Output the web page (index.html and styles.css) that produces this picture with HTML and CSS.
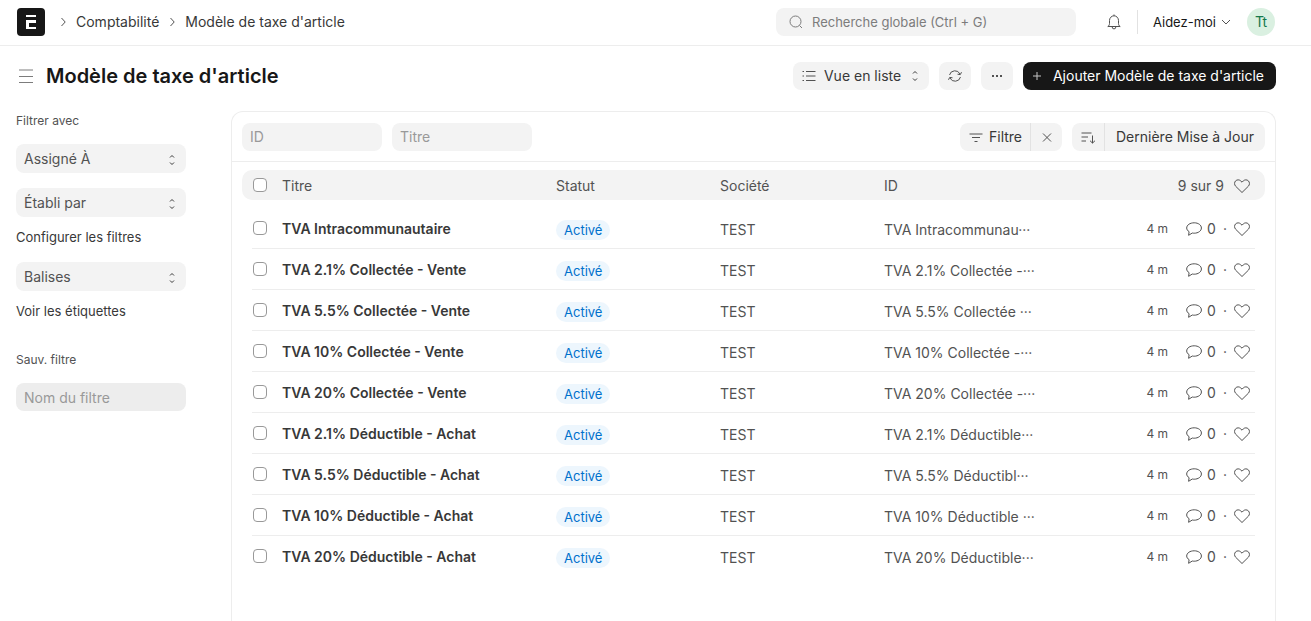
FILE: index.html
```
<!DOCTYPE html>
<html lang="fr">
<head>
    <meta charset="UTF-8">
    <meta name="viewport" content="width=device-width, initial-scale=1.0">
    <title>Modèle de taxe d'article</title>
    <link rel="stylesheet" href="styles.css">
</head>
<body>
    <svg class="icon-defs" aria-hidden="true">
        <symbol id="icon-right" viewBox="0 0 16 16"><path d="M6.5 12L10.2 8 6.5 4"/></symbol>
        <symbol id="icon-down" viewBox="0 0 12 12"><path d="M2 4l4 4 4-4"/></symbol>
        <symbol id="icon-select" viewBox="0 0 12 12"><path d="M4 3.500L6 1.500l2 2M4 8.500l2 2 2-2"/></symbol>
        <symbol id="icon-search" viewBox="0 0 16 16"><circle cx="7.5" cy="7.5" r="5.5"/><path d="M11.5 11.5L14 14"/></symbol>
        <symbol id="icon-bell" viewBox="0 0 16 16"><path d="M8 .5v1.300M1.800 12.500h12.400c-1.200-.8-1.700-1.600-1.700-3V6.500a4.500 4.700 0 0 0-9 0v3c0 1.400-.5 2.200-1.700 3zM6.200 13a1.800 1.900 0 0 0 3.600 0"/></symbol>
        <symbol id="icon-menu" viewBox="0 0 16 16"><path d="M1 2h14M1 8.500h14M1 14.500h14"/></symbol>
        <symbol id="icon-list" viewBox="0 0 16 16"><path d="M5 3.500h9.500M5 8h9.500M5 12.500h9.500M1.500 3.500h1.500M1.500 8h1.500M1.500 12.500h1.500"/></symbol>
        <symbol id="icon-refresh" viewBox="0 0 16 16"><path d="M2.500 7A5.600 5.600 0 0 1 13 6M13.500 9A5.600 5.600 0 0 1 3 10"/><path d="M10.500 6.200l2.800.4 1.200-2.400M5.500 9.800l-2.800-.4-1.200 2.400"/></symbol>
        <symbol id="icon-add" viewBox="0 0 12 12"><path d="M6 2v8M2 6h8"/></symbol>
        <symbol id="icon-close" viewBox="0 0 16 16"><path d="M4 4.500l8 8M12 4.500l-8 8"/></symbol>
        <symbol id="icon-filter" viewBox="0 0 16 16"><path d="M1.500 5h13M4 8.500h8M6.500 12.500h3"/></symbol>
        <symbol id="icon-sort" viewBox="0 0 16 16"><path d="M1.500 4h10M1.500 8h6.500M1.500 12h4.500M12.500 6.500v7.500M10 11.700l2.500 2.400 2.500-2.400"/></symbol>
        <symbol id="icon-heart" viewBox="0 0 16 16"><path d="M8 14.500L1.600 8.200C.2 6.700.2 4.300 1.600 2.900c1.400-1.400 3.700-1.400 5.100 0L8 4.200l1.300-1.300c1.400-1.400 3.700-1.400 5.100 0 1.400 1.400 1.400 3.800 0 5.300z"/></symbol>
        <symbol id="icon-comment" viewBox="0 0 16 16"><path d="M2.600 14.300l.5-3.600C1.600 9.700.7 8.500.7 7 .7 4 4 1.800 8.200 1.800S15.400 4.100 15.400 7s-3.200 5.200-7.200 5.200c-.6 0-1.300 0-1.900-.2z"/></symbol>
    </svg>

    <header class="navbar">
        <a href="#" class="logo" aria-label="Accueil">
            <svg viewBox="0 0 28 28" aria-hidden="true">
                <rect width="28" height="28" rx="4"/>
                <path d="M9 7h10v2H9zM9 12h10v3h-7v4h7v2H9z" class="logo-mark"/>
            </svg>
        </a>
        <nav class="breadcrumb">
            <svg class="icon"><use href="#icon-right"/></svg>
            <a href="#">Comptabilité</a>
            <svg class="icon"><use href="#icon-right"/></svg>
            <a href="#">Modèle de taxe d'article</a>
        </nav>
        <div class="search">
            <svg class="icon"><use href="#icon-search"/></svg>
            <input type="text" placeholder="Recherche globale (Ctrl + G)" aria-label="Recherche globale">
        </div>
        <button class="bell" aria-label="Notifications"><svg class="icon"><use href="#icon-bell"/></svg></button>
        <button class="help">Aidez-moi <svg class="icon icon-sm"><use href="#icon-down"/></svg></button>
        <button class="avatar">Tt</button>
    </header>

    <div class="page-head">
        <button class="menu-toggle" aria-label="Menu"><svg class="icon"><use href="#icon-menu"/></svg></button>
        <h1>Modèle de taxe d'article</h1>
        <div class="view-select">
            <svg class="icon"><use href="#icon-list"/></svg>
            <select aria-label="Vue"><option>Vue en liste</option></select>
            <svg class="icon icon-select"><use href="#icon-select"/></svg>
        </div>
        <button class="btn btn-icon" aria-label="Actualiser"><svg class="icon"><use href="#icon-refresh"/></svg></button>
        <button class="btn btn-icon" aria-label="Plus"><span class="dots"></span></button>
        <button class="btn btn-primary"><svg class="icon icon-sm"><use href="#icon-add"/></svg> Ajouter Modèle de taxe d'article</button>
    </div>

    <div class="page-body">
        <aside class="sidebar">
            <div class="side-label">Filtrer avec</div>
            <div class="side-select">
                <select aria-label="Assigné À"><option>Assigné À</option></select>
                <svg class="icon icon-select"><use href="#icon-select"/></svg>
            </div>
            <div class="side-select">
                <select aria-label="Établi par"><option>Établi par</option></select>
                <svg class="icon icon-select"><use href="#icon-select"/></svg>
            </div>
            <a href="#" class="side-link">Configurer les filtres</a>
            <div class="side-select">
                <select aria-label="Balises"><option>Balises</option></select>
                <svg class="icon icon-select"><use href="#icon-select"/></svg>
            </div>
            <a href="#" class="side-link">Voir les étiquettes</a>
            <label for="filterName" class="side-label save-label">Sauv. filtre</label>
            <input type="text" id="filterName" class="filter-name" placeholder="Nom du filtre">
        </aside>

        <main class="list">
            <div class="filters">
                <input type="text" class="field" placeholder="ID" aria-label="ID">
                <input type="text" class="field" placeholder="Titre" aria-label="Titre">
                <div class="btn-group push">
                    <button class="btn btn-filter"><svg class="icon"><use href="#icon-filter"/></svg> Filtre</button>
                    <button class="btn btn-icon" aria-label="Effacer les filtres"><svg class="icon"><use href="#icon-close"/></svg></button>
                </div>
                <div class="btn-group">
                    <button class="btn btn-icon" aria-label="Ordre de tri"><svg class="icon"><use href="#icon-sort"/></svg></button>
                    <button class="btn btn-sort">Dernière Mise à Jour</button>
                </div>
            </div>

            <table>
                <thead>
                    <tr>
                        <th><input type="checkbox" aria-label="Tout sélectionner"></th>
                        <th>Titre</th>
                        <th>Statut</th>
                        <th>Société</th>
                        <th>ID</th>
                        <th class="meta">9 sur 9 <svg class="icon heart"><use href="#icon-heart"/></svg></th>
                    </tr>
                </thead>
                <tbody>
                    <tr>
                        <td><input type="checkbox" aria-label="TVA Intracommunautaire"></td>
                        <td class="title">TVA Intracommunautaire</td>
                        <td><span class="pill">Activé</span></td>
                        <td>TEST</td>
                        <td class="name">TVA Intracommunau···</td>
                        <td class="meta"><span class="age">4 m</span><svg class="icon"><use href="#icon-comment"/></svg><span class="count">0</span><span class="sep">·</span><svg class="icon heart"><use href="#icon-heart"/></svg></td>
                    </tr>
                    <tr>
                        <td><input type="checkbox" aria-label="TVA 2.1% Collectée - Vente"></td>
                        <td class="title">TVA 2.1% Collectée - Vente</td>
                        <td><span class="pill">Activé</span></td>
                        <td>TEST</td>
                        <td class="name">TVA 2.1% Collectée -···</td>
                        <td class="meta"><span class="age">4 m</span><svg class="icon"><use href="#icon-comment"/></svg><span class="count">0</span><span class="sep">·</span><svg class="icon heart"><use href="#icon-heart"/></svg></td>
                    </tr>
                    <tr>
                        <td><input type="checkbox" aria-label="TVA 5.5% Collectée - Vente"></td>
                        <td class="title">TVA 5.5% Collectée - Vente</td>
                        <td><span class="pill">Activé</span></td>
                        <td>TEST</td>
                        <td class="name">TVA 5.5% Collectée ···</td>
                        <td class="meta"><span class="age">4 m</span><svg class="icon"><use href="#icon-comment"/></svg><span class="count">0</span><span class="sep">·</span><svg class="icon heart"><use href="#icon-heart"/></svg></td>
                    </tr>
                    <tr>
                        <td><input type="checkbox" aria-label="TVA 10% Collectée - Vente"></td>
                        <td class="title">TVA 10% Collectée - Vente</td>
                        <td><span class="pill">Activé</span></td>
                        <td>TEST</td>
                        <td class="name">TVA 10% Collectée -···</td>
                        <td class="meta"><span class="age">4 m</span><svg class="icon"><use href="#icon-comment"/></svg><span class="count">0</span><span class="sep">·</span><svg class="icon heart"><use href="#icon-heart"/></svg></td>
                    </tr>
                    <tr>
                        <td><input type="checkbox" aria-label="TVA 20% Collectée - Vente"></td>
                        <td class="title">TVA 20% Collectée - Vente</td>
                        <td><span class="pill">Activé</span></td>
                        <td>TEST</td>
                        <td class="name">TVA 20% Collectée -···</td>
                        <td class="meta"><span class="age">4 m</span><svg class="icon"><use href="#icon-comment"/></svg><span class="count">0</span><span class="sep">·</span><svg class="icon heart"><use href="#icon-heart"/></svg></td>
                    </tr>
                    <tr>
                        <td><input type="checkbox" aria-label="TVA 2.1% Déductible - Achat"></td>
                        <td class="title">TVA 2.1% Déductible - Achat</td>
                        <td><span class="pill">Activé</span></td>
                        <td>TEST</td>
                        <td class="name">TVA 2.1% Déductible···</td>
                        <td class="meta"><span class="age">4 m</span><svg class="icon"><use href="#icon-comment"/></svg><span class="count">0</span><span class="sep">·</span><svg class="icon heart"><use href="#icon-heart"/></svg></td>
                    </tr>
                    <tr>
                        <td><input type="checkbox" aria-label="TVA 5.5% Déductible - Achat"></td>
                        <td class="title">TVA 5.5% Déductible - Achat</td>
                        <td><span class="pill">Activé</span></td>
                        <td>TEST</td>
                        <td class="name">TVA 5.5% Déductibl···</td>
                        <td class="meta"><span class="age">4 m</span><svg class="icon"><use href="#icon-comment"/></svg><span class="count">0</span><span class="sep">·</span><svg class="icon heart"><use href="#icon-heart"/></svg></td>
                    </tr>
                    <tr>
                        <td><input type="checkbox" aria-label="TVA 10% Déductible - Achat"></td>
                        <td class="title">TVA 10% Déductible - Achat</td>
                        <td><span class="pill">Activé</span></td>
                        <td>TEST</td>
                        <td class="name">TVA 10% Déductible ···</td>
                        <td class="meta"><span class="age">4 m</span><svg class="icon"><use href="#icon-comment"/></svg><span class="count">0</span><span class="sep">·</span><svg class="icon heart"><use href="#icon-heart"/></svg></td>
                    </tr>
                    <tr>
                        <td><input type="checkbox" aria-label="TVA 20% Déductible - Achat"></td>
                        <td class="title">TVA 20% Déductible - Achat</td>
                        <td><span class="pill">Activé</span></td>
                        <td>TEST</td>
                        <td class="name">TVA 20% Déductible···</td>
                        <td class="meta"><span class="age">4 m</span><svg class="icon"><use href="#icon-comment"/></svg><span class="count">0</span><span class="sep">·</span><svg class="icon heart"><use href="#icon-heart"/></svg></td>
                    </tr>
                </tbody>
            </table>
        </main>
    </div>
</body>
</html>
```
FILE: styles.css
```
* {
    box-sizing: border-box;
}
body {
    margin: 0;
    min-height: 100vh;
    display: flex;
    flex-direction: column;
    font-family: Inter, sans-serif;
    font-size: 14px;
    line-height: 20px;
    color: #383838;
    background-color: #fff;
}
a {
    color: inherit;
    text-decoration: none;
}
button, input, select {
    font: inherit;
    color: inherit;
    border: none;
    margin: 0;
}
button {
    padding: 0;
    background: none;
    cursor: pointer;
}
select {
    appearance: none;
    background: none;
    cursor: pointer;
}
input::placeholder {
    color: #999;
    opacity: 1;
}
.icon-defs {
    display: none;
}
.icon {
    width: 16px;
    height: 16px;
    flex: none;
    fill: none;
    stroke: #525252;
}
.icon-sm {
    width: 12px;
    height: 12px;
}
.icon-select {
    width: 12px;
    height: 12px;
    stroke: #383838;
}

/* Top bar */
.navbar {
    display: flex;
    align-items: center;
    height: 46px;
    padding: 0 36px 2px 17px;
    border-bottom: 1px solid #ededed;
}
.logo, .logo svg {
    display: block;
    width: 28px;
    height: 28px;
}
.logo svg {
    fill: #171717;
}
.logo .logo-mark {
    fill: #fff;
}
.breadcrumb {
    display: flex;
    align-items: center;
    gap: 5px;
    margin-left: 10px;
}
.search {
    display: flex;
    align-items: center;
    gap: 6px;
    width: 300px;
    height: 28px;
    margin-left: auto;
    padding: 0 12px;
    background-color: #f3f3f3;
    border-radius: 8px;
}
.search .icon {
    stroke: #7c7c7c;
}
.search input {
    flex: 1;
    min-width: 0;
    background: none;
    font-size: 13px;
}
.search input::placeholder {
    color: #7c7c7c;
}
.bell {
    display: flex;
    margin-left: 30px;
}
.help {
    display: flex;
    align-items: center;
    gap: 4px;
    height: 24px;
    margin-left: 15px;
    padding-left: 15px;
    border-left: 1px solid #e2e2e2;
    font-size: 13px;
    color: #171717;
}
.avatar {
    width: 28px;
    height: 28px;
    margin-left: 15px;
    border-radius: 50%;
    background-color: #daf0e1;
    color: #16794c;
}

/* Page title and actions */
.page-head {
    display: flex;
    align-items: center;
    height: 60px;
    padding: 0 35px 0 18px;
}
.menu-toggle {
    display: flex;
    margin-right: 12px;
}
.menu-toggle .icon {
    stroke: #7c7c7c;
}
h1 {
    margin: 0 auto 0 0;
    font-size: 20px;
    line-height: 28px;
    font-weight: 600;
    color: #171717;
}
.btn {
    display: flex;
    align-items: center;
    justify-content: center;
    gap: 8px;
    height: 28px;
    padding: 0 8px;
    background-color: #f3f3f3;
    border-radius: 8px;
    white-space: nowrap;
}
.page-head .btn {
    margin-left: 10px;
}
.btn.btn-icon {
    width: 32px;
}
.page-head .btn-primary {
    gap: 10px;
    padding: 0 12px 0 8px;
    background-color: #171717;
    color: #fff;
}
.btn-primary .icon {
    stroke: #c7c7c7;
}
.view-select {
    display: flex;
    align-items: center;
    gap: 7px;
    height: 28px;
    padding: 0 8px;
    background-color: #f3f3f3;
    border-radius: 8px;
}
.view-select select {
    padding: 0;
}
.dots {
    width: 2px;
    height: 2px;
    background-color: #525252;
    box-shadow: -4px 0 #525252, 4px 0 #525252;
}

/* Left column */
.page-body {
    flex: 1;
    display: flex;
    gap: 45px;
    padding: 5px 35px 0 16px;
}
.sidebar {
    width: 170px;
    flex: none;
    color: #525252;
}
.side-label {
    display: block;
    margin-bottom: 13px;
    font-size: 12px;
}
.side-select {
    position: relative;
    margin-bottom: 15px;
}
.side-select select {
    display: block;
    width: 100%;
    height: 29px;
    padding: 0 8px;
    background-color: #f3f3f3;
    border-radius: 8px;
}
.side-select .icon-select {
    position: absolute;
    top: 10px;
    right: 8px;
    pointer-events: none;
}
.side-select:has(+ .side-link) {
    margin-bottom: 10px;
}
.side-link {
    display: block;
    margin-bottom: 15px;
    font-size: 13px;
    color: #383838;
}
.save-label {
    margin-top: 29px;
}
.filter-name {
    width: 100%;
    height: 28px;
    padding: 0 8px;
    background-color: #ededed;
    border-radius: 8px;
}

/* List panel */
.list {
    flex: 1;
    min-width: 0;
    border: 1px solid #ededed;
    border-bottom: none;
    border-radius: 12px 12px 0 0;
}
.filters {
    display: flex;
    align-items: center;
    gap: 10px;
    height: 50px;
    padding: 0 10px;
    border-bottom: 1px solid #ededed;
}
.field {
    width: 140px;
    height: 28px;
    padding: 0 8px;
    background-color: #f3f3f3;
    border-radius: 8px;
}
.push {
    margin-left: auto;
}
.btn-group {
    display: flex;
    border-radius: 8px;
    overflow: hidden;
}
.btn-group .btn {
    border-radius: 0;
}
.btn-group .btn + .btn {
    border-left: 1px solid #e2e2e2;
}
.btn.btn-filter {
    gap: 5px;
}
.btn.btn-sort {
    padding: 0 11px;
}
table, thead, tbody {
    display: block;
}
table {
    padding: 8px 10px 0;
    color: #525252;
}
tbody {
    padding: 8px 10px 0;
}
tr {
    display: grid;
    grid-template-columns: 30px minmax(0, 274fr) minmax(0, 164fr) minmax(0, 164fr) minmax(0, 164fr) minmax(0, 207fr);
    align-items: center;
    height: 41px;
    border-bottom: 1px solid #ededed;
}
tbody tr:last-child {
    border-color: transparent;
}
thead tr {
    height: 30px;
    padding: 0 10px;
    border: none;
    border-radius: 10px;
    background-color: #f3f3f3;
}
th, td {
    padding: 2px 0 0;
    text-align: left;
    font-weight: 400;
    white-space: nowrap;
}
td {
    padding-top: 4px;
}
th:first-child, td:first-child {
    padding: 0;
}
.title {
    padding-top: 2px;
    font-weight: 600;
    color: #383838;
}
.name {
    overflow: hidden;
}
input[type="checkbox"] {
    display: block;
    appearance: none;
    width: 14px;
    height: 14px;
    margin-left: 1px;
    border: 1px solid #999;
    border-radius: 4px;
    background-color: #fff;
}
.pill {
    display: inline-block;
    padding: 0 8px;
    border-radius: 10px;
    background-color: #edf6fd;
    color: #0070cc;
    font-size: 13px;
}
.meta {
    display: flex;
    align-items: center;
    justify-content: flex-end;
    padding: 2px 5px 0 0;
}
.meta .heart {
    margin-left: 10px;
}
.age {
    margin-right: 18px;
    font-size: 12px;
}
.count {
    margin-left: 5px;
}
.sep {
    margin-left: 7px;
}
td .heart.icon {
    margin-left: 7px;
}
```
